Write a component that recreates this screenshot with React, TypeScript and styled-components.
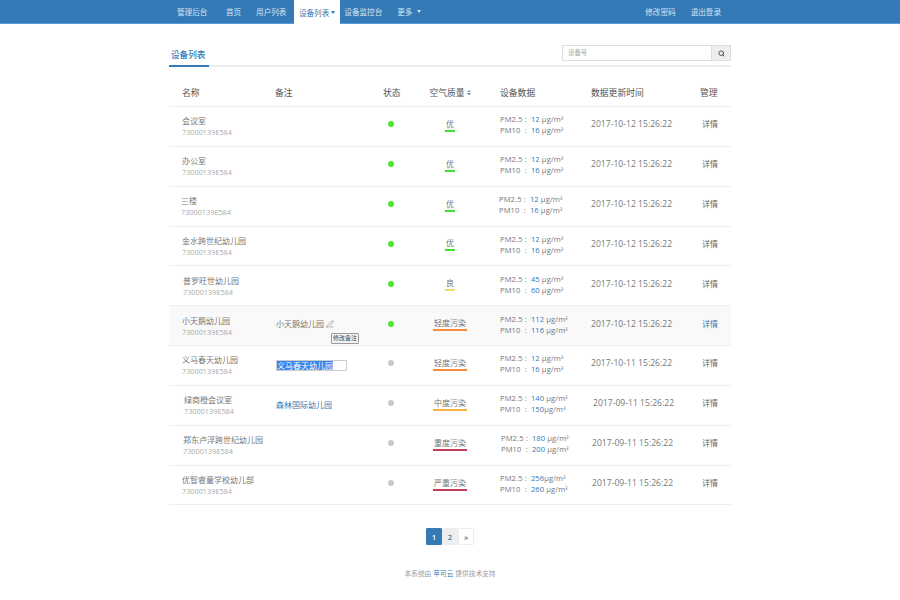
import React from 'react';
import styled, { createGlobalStyle } from 'styled-components';
import { Search, PenLine } from 'lucide-react';

const BLUE = '#337ab7';

const GlobalStyle = createGlobalStyle`
  html, body {
    margin: 0;
    padding: 0;
    background: #fff;
    font-family: "Open Sans", "Noto Sans CJK SC", sans-serif;
    color: #666;
  }
`;

const Navbar = styled.nav`
  height: 23px;
  background: ${BLUE};
  border-bottom: 1px solid #5b9bd5;
  display: flex;
  justify-content: center;
`;

const NavInner = styled.div`
  width: 562px;
  display: flex;
  align-items: stretch;
  font-size: 7.6px;
`;

const NavItem = styled.a<{ $active?: boolean }>`
  display: flex;
  align-items: center;
  gap: 2px;
  padding: 0 ${(p) => (p.$active ? '5px' : '4px')};
  height: ${(p) => (p.$active ? '24px' : '23px')};
  color: ${(p) => (p.$active ? BLUE : '#d5e4f2')};
  background: ${(p) => (p.$active ? '#fff' : 'transparent')};
`;

const Brand = styled(NavItem)`
  padding-left: 8px;
  padding-right: 11px;
`;

const NavLink = styled(NavItem)`
  padding: 0 7.5px;
`;

const MoreItem = styled(NavItem)`
  margin-left: 7px;
  gap: 5px;
`;

const NavRight = styled.div`
  margin-left: auto;
  display: flex;
  gap: 7px;
  padding-right: 6px;
`;

const Caret = styled.i`
  display: inline-block;
  width: 0;
  height: 0;
  border-left: 2.5px solid transparent;
  border-right: 2.5px solid transparent;
  border-top: 3px solid currentColor;
`;

const Page = styled.main`
  width: 562px;
  margin: 0 auto;
`;

const TitleBar = styled.div`
  height: 43px;
  box-sizing: border-box;
  display: flex;
  justify-content: space-between;
  align-items: flex-end;
  border-bottom: 2px solid #eee;
`;

const Title = styled.h2`
  margin: 0 0 -2px;
  padding: 0 2px 0;
  width: 36px;
  height: 21px;
  line-height: 22px;
  font-size: 8.6px;
  font-weight: 500;
  color: ${BLUE};
  border-bottom: 2px solid ${BLUE};
`;

const SearchBox = styled.div`
  display: flex;
  height: 14px;
  margin-bottom: 4px;
  border: 1px solid #ddd;
`;

const SearchInput = styled.div`
  width: 143px;
  padding-left: 5px;
  font-size: 6.4px;
  line-height: 14px;
  color: #aaa;
`;

const SearchButton = styled.div`
  width: 18px;
  background: #eee;
  border-left: 1px solid #ddd;
  display: flex;
  align-items: center;
  justify-content: center;
  color: #444;
`;

const Row = styled.div<{ $hover?: boolean }>`
  display: grid;
  grid-template-columns: 106px 108px 37px 60px 111px 109px 31px;
  align-items: center;
  height: 39.85px;
  box-sizing: border-box;
  border-bottom: 1px solid #eee;
  background: ${(p) => (p.$hover ? '#f9f9f9' : 'transparent')};
`;

const HeadRow = styled(Row)`
  height: 40px;
  padding-top: 12px;
  font-size: 8.8px;
  color: #555;
`;

const HeadName = styled.span`
  padding-left: 13px;
`;

const HeadCenter = styled.span`
  text-align: center;
  display: flex;
  justify-content: center;
  align-items: center;
  gap: 2px;
`;

const HeadData = styled.span`
  padding-left: 20px;
`;

const SortIcon = styled.span`
  display: inline-flex;
  flex-direction: column;
  gap: 1px;
`;

const CaretUp = styled.i`
  width: 0;
  height: 0;
  border-left: 2.5px solid transparent;
  border-right: 2.5px solid transparent;
  border-bottom: 2.5px solid #7f9fbf;
`;

const CaretDown = styled.i`
  width: 0;
  height: 0;
  border-left: 2.5px solid transparent;
  border-right: 2.5px solid transparent;
  border-top: 2.5px solid ${BLUE};
`;

const NameCell = styled.div<{ $shift: number }>`
  padding-left: ${(p) => 13 + p.$shift}px;
  padding-top: 1px;
  display: flex;
  flex-direction: column;
  gap: 1px;
`;

const Name = styled.span`
  font-size: 8px;
  line-height: 10px;
  color: #777;
`;

const DeviceId = styled.span`
  font-size: 7.3px;
  line-height: 10px;
  color: #aaa;
`;

const NoteCell = styled.div`
  position: relative;
  padding-left: 1px;
  font-size: 8px;
  display: flex;
  align-items: center;
  gap: 2px;
`;

const NoteLink = styled.span`
  color: ${BLUE};
  margin-top: -1px;
`;

const NoteText = styled.span`
  color: #777;
  margin-top: -4px;
`;

const NoteIcon = styled(PenLine)`
  margin-top: -3px;
`;

const NoteInput = styled.div`
  width: 71px;
  height: 11px;
  box-sizing: border-box;
  border: 1px solid #ccc;
  line-height: 9px;
  display: flex;
`;

const Selected = styled.span`
  background: #3a86ef;
  color: #fff;
  height: 9px;
`;

const Tip = styled.span`
  position: absolute;
  left: 56px;
  top: 11px;
  padding: 0 1px;
  font-size: 6px;
  line-height: 9px;
  border: 1px solid #999;
  border-radius: 1px;
  background: #f4f4f4;
  color: #444;
`;

const Dot = styled.i<{ $online: boolean }>`
  display: block;
  width: 6px;
  height: 6px;
  margin-left: 5px;
  margin-top: -4px;
  border-radius: 50%;
  background: ${(p) => (p.$online ? '#4ee62f' : '#c9c9c9')};
`;

const AirCell = styled.div`
  display: flex;
  justify-content: center;
  margin-top: -5px;
`;

const AirLabel = styled.span<{ $color: string }>`
  font-size: 8px;
  line-height: 10px;
  padding: 3px 1px 1px;
  color: #777;
  border-bottom: 2px solid ${(p) => p.$color};
`;

const DataCell = styled.div<{ $shift: number }>`
  padding-left: ${(p) => 20 + p.$shift}px;
  margin-top: -2px;
  font-size: 7.6px;
  letter-spacing: 0.1px;
  line-height: 11px;
  color: #777;
`;

const DataLine = styled.div`
  white-space: pre;
`;

const Value = styled.span`
  color: ${BLUE};
`;

const Cube = styled.span`
  font-size: 6.4px;
`;

const TimeCell = styled.div<{ $shift: number }>`
  padding-left: ${(p) => p.$shift}px;
  margin-top: -4px;
  font-size: 8.6px;
  color: #777;
  white-space: nowrap;
`;

const ManageCell = styled.a<{ $hover?: boolean }>`
  font-size: 8px;
  padding-left: 2px;
  margin-top: -5px;
  color: ${(p) => (p.$hover ? BLUE : '#666')};
`;

const Pager = styled.div`
  display: flex;
  justify-content: center;
  margin-top: 23px;
  font-size: 7.6px;
  font-weight: 600;
`;

const PageButton = styled.a<{ $state?: 'active' | 'hover' }>`
  width: 16px;
  height: 17px;
  display: flex;
  align-items: center;
  justify-content: center;
  box-sizing: border-box;
  border: 1px solid ${(p) => (p.$state === 'active' ? BLUE : '#eee')};
  border-radius: 1px;
  background: ${(p) => (p.$state === 'active' ? BLUE : p.$state === 'hover' ? '#eee' : '#fff')};
  color: ${(p) => (p.$state === 'active' ? '#fff' : BLUE)};
`;

const Footer = styled.footer`
  margin-top: 23px;
  display: flex;
  justify-content: center;
  gap: 2px;
  font-size: 6.7px;
  color: #999;
`;

const FooterLink = styled.span`
  color: ${BLUE};
`;

type Device = {
  name: string;
  nameShift?: number;
  online: boolean;
  air: string;
  airColor: string;
  pm25: string;
  pm10: string;
  tight?: 'pm25' | 'pm10';
  dataShift?: number;
  time: string;
  timeShift?: number;
};

const green = '#3fe02a';
const crimson = '#c83a5e';

const devices: Device[] = [
  { name: '会议室', online: true, air: '优', airColor: green, pm25: '12', pm10: '16', time: '2017-10-12 15:26:22' },
  { name: '办公室', online: true, air: '优', airColor: green, pm25: '12', pm10: '16', time: '2017-10-12 15:26:22' },
  { name: '三楼', nameShift: -1, online: true, air: '优', airColor: green, pm25: '12', pm10: '16', dataShift: -1, time: '2017-10-12 15:26:22' },
  { name: '金水跨世纪幼儿园', online: true, air: '优', airColor: green, pm25: '12', pm10: '16', time: '2017-10-12 15:26:22' },
  { name: '普罗旺世幼儿园', nameShift: 1, online: true, air: '良', airColor: '#f5d76e', pm25: '45', pm10: '60', timeShift: -1, time: '2017-10-12 15:26:22' },
  { name: '小天鹅幼儿园', online: true, air: '轻度污染', airColor: '#f98c3c', pm25: '112', pm10: '116', time: '2017-10-12 15:26:22' },
  { name: '义马春天幼儿园', online: false, air: '轻度污染', airColor: '#f98c3c', pm25: '12', pm10: '16', time: '2017-10-11 15:26:22' },
  { name: '绿商橙会议室', nameShift: 2, online: false, air: '中度污染', airColor: '#f7b23b', pm25: '140', pm10: '150', tight: 'pm10', timeShift: 2, time: '2017-09-11 15:26:22' },
  { name: '郑东卢浮跨世纪幼儿园', nameShift: 1, online: false, air: '重度污染', airColor: crimson, pm25: '180', pm10: '200', dataShift: 1, timeShift: 1, time: '2017-09-11 15:26:22' },
  { name: '优智睿童学校幼儿部', online: false, air: '严重污染', airColor: crimson, pm25: '256', pm10: '260', tight: 'pm25', timeShift: 1, time: '2017-09-11 15:26:22' },
];

const renderNote = (index: number) => {
  if (index === 5) {
    return (
      <>
        <NoteText>小天鹅幼儿园</NoteText>
        <NoteIcon size={8} strokeWidth={1.5} color="#666" />
        <Tip>修改备注</Tip>
      </>
    );
  }
  if (index === 6) {
    return (
      <NoteInput>
        <Selected>义马春天幼儿园</Selected>
      </NoteInput>
    );
  }
  if (index === 7) return <NoteLink>森林国际幼儿园</NoteLink>;
  return null;
};

const App = () => (
  <>
    <GlobalStyle />
    <Navbar>
      <NavInner>
        <Brand>管理后台</Brand>
        <NavLink>首页</NavLink>
        <NavLink>用户列表</NavLink>
        <NavItem $active>
          设备列表
          <Caret />
        </NavItem>
        <NavItem>设备监控台</NavItem>
        <MoreItem>
          更多
          <Caret />
        </MoreItem>
        <NavRight>
          <NavItem>修改密码</NavItem>
          <NavItem>退出登录</NavItem>
        </NavRight>
      </NavInner>
    </Navbar>
    <Page>
      <TitleBar>
        <Title>设备列表</Title>
        <SearchBox>
          <SearchInput>设备号</SearchInput>
          <SearchButton>
            <Search size={7} strokeWidth={3} />
          </SearchButton>
        </SearchBox>
      </TitleBar>
      <HeadRow>
        <HeadName>名称</HeadName>
        <span>备注</span>
        <span>状态</span>
        <HeadCenter>
          空气质量
          <SortIcon>
            <CaretUp />
            <CaretDown />
          </SortIcon>
        </HeadCenter>
        <HeadData>设备数据</HeadData>
        <span>数据更新时间</span>
        <span>管理</span>
      </HeadRow>
      {devices.map((d, i) => (
        <Row key={d.name} $hover={i === 5}>
          <NameCell $shift={d.nameShift || 0}>
            <Name>{d.name}</Name>
            <DeviceId>73000139E584</DeviceId>
          </NameCell>
          <NoteCell>{renderNote(i)}</NoteCell>
          <div>
            <Dot $online={d.online} />
          </div>
          <AirCell>
            <AirLabel $color={d.airColor}>{d.air}</AirLabel>
          </AirCell>
          <DataCell $shift={d.dataShift || 0}>
            <DataLine>
              PM2.5 :  <Value>{d.pm25}</Value>{d.tight === 'pm25' ? '' : ' '}μg/m<Cube>³</Cube>
            </DataLine>
            <DataLine>
              PM10  :  <Value>{d.pm10}</Value>{d.tight === 'pm10' ? '' : ' '}μg/m<Cube>³</Cube>
            </DataLine>
          </DataCell>
          <TimeCell $shift={d.timeShift || 0}>{d.time}</TimeCell>
          <ManageCell $hover={i === 5}>详情</ManageCell>
        </Row>
      ))}
      <Pager>
        <PageButton $state="active">1</PageButton>
        <PageButton $state="hover">2</PageButton>
        <PageButton>»</PageButton>
      </Pager>
      <Footer>
        本系统由 <FooterLink>苹可云</FooterLink> 提供技术支持
      </Footer>
    </Page>
  </>
);

export default App;
